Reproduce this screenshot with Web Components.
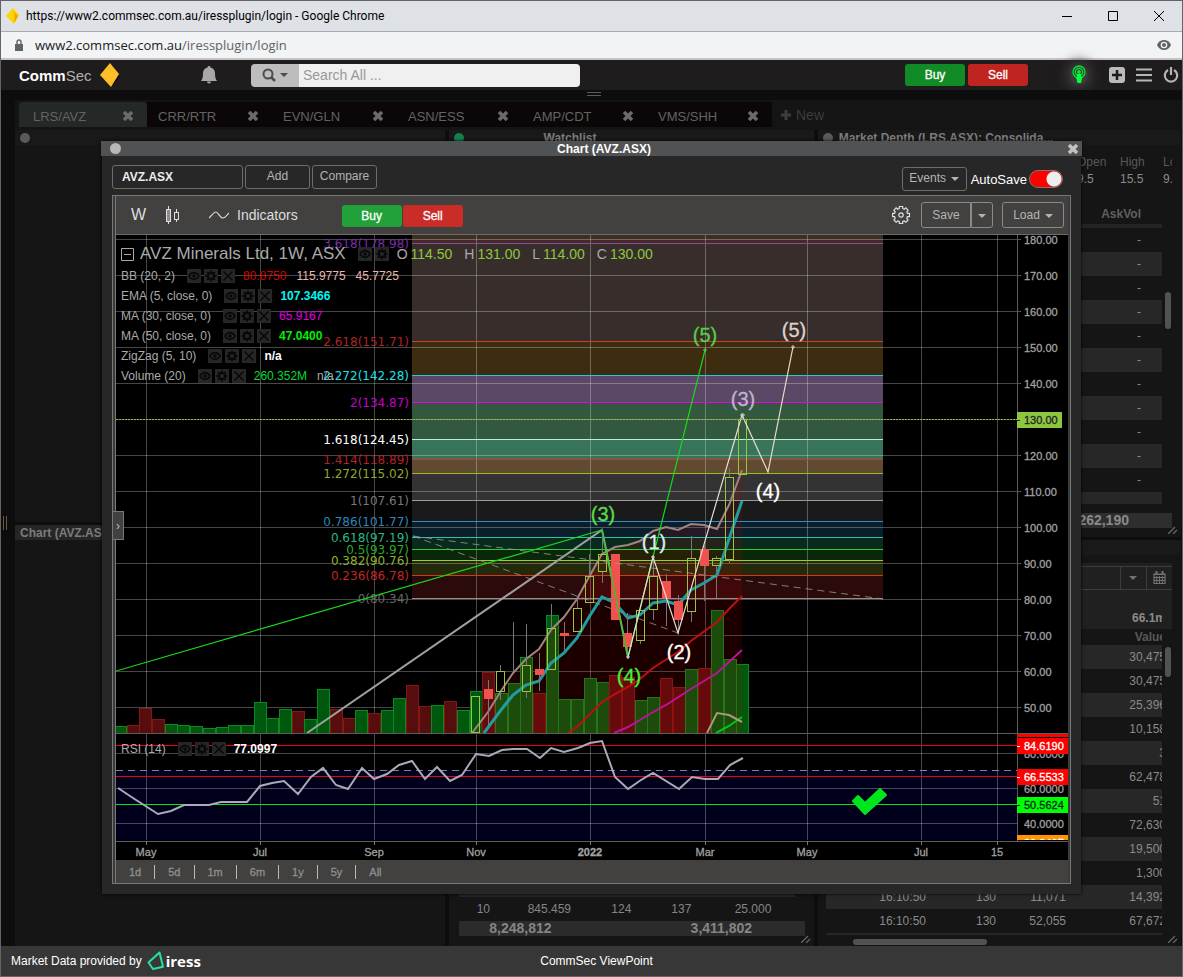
<!DOCTYPE html>
<html lang="en">
<head>
<meta charset="utf-8">
<title>CommSec ViewPoint</title>
<style>
  html, body {
    margin: 0;
    min-height: 100%;
    background: #0d0d0d;
  }

  body {
    font-family: "Liberation Sans", Arial, sans-serif;
    font-size: 12px;
  }
</style>
</head>
<body>
<vp-app></vp-app>

<script>
const ICONS = {
  diamond: ["0 0 24 26", `<path d="M13 3l8 12-9 10z" fill="#000" opacity=".6"/><path d="M11 1l9 11-8 13L1 13z" fill="#fdbf27"/>`],
  favicon: ["0 0 14 16", `<path d="M7 0l6 7-5 9L0 8z" fill="#ffd400"/><path d="M7 3l5 5-4 7 1-8z" fill="#f4a000"/>`],
  lock: ["0 0 10 12", `<path d="M1 5h8v7H1z" fill="#5f6368"/><path d="M3 5V3a2 2 0 0 1 4 0v2" fill="none" stroke="#5f6368" stroke-width="1.4"/>`],
  bell: ["0 0 16 18", `<path d="M8 0c1 0 1.500.6 1.500 1.500C12.500 2.200 14 4.500 14 7c0 4 .5 6 2 8H0c1.500-2 2-4 2-8 0-2.500 1.500-4.800 4.500-5.500C6.500.6 7 0 8 0zM6 15.500h4a2 2 0 0 1-4 0z" fill="#a8a8a8"/>`],
  search: ["0 0 14 14", `<circle cx="6" cy="6" r="4.500" fill="none" stroke="#4c4c4c" stroke-width="2"/><path d="M9 9l4 4" stroke="#4c4c4c" stroke-width="2.500"/>`],
  caret: ["0 0 8 4", `<path d="M0 0h8L4 4z" fill="currentColor"/>`],
  bulb: ["0 0 14 20", `<g fill="none" stroke="#00e535" stroke-width="1.300"><circle cx="7" cy="7" r="6"/><circle cx="7" cy="7" r="3.700"/></g><circle cx="7" cy="7" r="2" fill="#00e535"/><path d="M5 9h4v3h1.500L9 18H5.500L4 12h1z" fill="#00ff3c"/>`],
  plus: ["0 0 16 16", `<rect width="16" height="16" rx="3" fill="#bbb"/><path d="M8 3v10M3 8h10" stroke="#1f1c1d" stroke-width="2.500"/>`],
  menu: ["0 0 16 14", `<path d="M0 1.500h16M0 7h16M0 12.500h16" stroke="#b5b5b5" stroke-width="2.200"/>`],
  power: ["0 0 16 16", `<path d="M5 3a6.200 6.200 0 1 0 6 0" fill="none" stroke="#b5b5b5" stroke-width="2.200"/><path d="M8 0v8" stroke="#b5b5b5" stroke-width="2.200"/>`],
  cross: ["0 0 12 12", `<path d="M2 2l8 8M10 2l-8 8" stroke="currentColor" stroke-width="3.600"/>`],
  add: ["0 0 12 12", `<path d="M6 1v10M1 6h10" stroke="currentColor" stroke-width="3"/>`],
  minimise: ["0 0 10 10", `<path d="M0 5.500h10" stroke="#000"/>`],
  maximise: ["0 0 10 10", `<path d="M.5.5h9v9h-9z" fill="none" stroke="#000"/>`],
  close: ["0 0 10 10", `<path d="M0 0l10 10M10 0L0 10" stroke="#000"/>`],
  view: ["0 0 14 10", `<path d="M0 5c1.500-3.200 4-5 7-5s5.500 1.800 7 5c-1.500 3.200-4 5-7 5S1.500 8.200 0 5z" fill="#5f6368"/><circle cx="7" cy="5" r="3.300" fill="#f1f3f4"/><circle cx="7" cy="5" r="2" fill="#5f6368"/>`],
  candles: ["0 0 16 20", `<path d="M4.500 1v18M12.500 4v3M12.500 14v3" stroke="#ddd"/><rect x="2.500" y="4.500" width="4" height="12" fill="#8c8c8c" stroke="#ddd"/><rect x="10.500" y="7.500" width="4" height="7" fill="none" stroke="#ddd"/>`],
  wave: ["0 0 20 8", `<path d="M0 7C3 4 5 1 7 1s4 6 7 6c2 0 4-3 6-5" fill="none" stroke="#ddd" stroke-width="1.200"/>`],
  cog: ["0 0 20 20", `<path d="M8.300 1.500h3.400v2l1.600.8 1.600-1.400 2.200 2.300-1.300 1.700.6 1.500h2.100v3.300h-2.100l-.6 1.600 1.300 1.600-2.200 2.300-1.700-1.300-1.500.6v2H8.300v-2l-1.500-.6-1.700 1.300-2.200-2.300 1.300-1.600-.6-1.600h-2V8.400h2l.6-1.500-1.300-1.700 2.200-2.300 1.600 1.400 1.600-.8z" fill="none" stroke="#e0e0e0" stroke-width="1.200"/><circle cx="10" cy="10" r="2.200" fill="none" stroke="#e0e0e0" stroke-width="1.200"/>`],
  eye: ["0 0 14 14", `<path d="M2 7c1.200-2.300 3-3.400 5-3.400S10.800 4.700 12 7c-1.200 2.300-3 3.400-5 3.400S3.200 9.300 2 7z" fill="none" stroke="#080808" stroke-width="1.600"/><circle cx="7" cy="7" r="1.800" fill="#080808"/>`],
  gear: ["0 0 14 14", `<circle cx="7" cy="7" r="3" fill="none" stroke="#080808" stroke-width="2"/><path d="M7 1.500v3M7 9.500v3M1.500 7h3M9.500 7h3M3.200 3.200L5 5M9 9l1.800 1.800M10.800 3.200L9 5M5 9l-1.800 1.800" stroke="#080808" stroke-width="1.800"/>`],
  remove: ["0 0 14 14", `<path d="M2.500 2.500l9 9M11.500 2.500l-9 9" stroke="#080808" stroke-width="1.500"/>`],
  collapse: ["0 0 13 13", `<path d="M.5.5h12v12H.5zM3 6.500h7" fill="none" stroke="#aaa"/>`],
  calendar: ["0 0 13 13", `<path d="M1 3h11v9.500H1z" fill="none" stroke="#737373" stroke-width="1.200"/><path d="M1 3.500h11M1 6.500h11M1 9.500h11M3.700 5v7M6.500 5v7M9.300 5v7" stroke="#737373"/><path d="M3.500 0v4M9.500 0v4" stroke="#737373" stroke-width="2"/>`],
  grip: ["0 0 10 8", `<path d="M0 8L7 1M5 8l4-4" stroke="#666" stroke-width="1.300"/>`],
  iress: ["0 0 18 20", `<path d="M12.500 1.500L1.500 11.500 6 18l10-2.200z" fill="none" stroke="#25e39a" stroke-width="2" stroke-linejoin="round"/>`],
}

function define(name, html) {
  /* Register a custom element that renders the given shadow markup.
     html is a string, or a function of the element.
   */
  customElements.define(name, class extends HTMLElement {
    connectedCallback() {
      if (this.shadowRoot) return
      const root = this.attachShadow({ mode: "open" })
      const template = document.createElement("template")
      template.innerHTML = typeof html === "function" ? html(this) : html
      root.appendChild(template.content.cloneNode(true))
    }
  })
}

define("vp-icon", el => {
  const [box, body] = ICONS[el.getAttribute("name")]
  const [, , w, h] = box.split(" ")
  return `
    <style>
      :host { display: inline-flex; flex: none; }
      svg { display: block; }
    </style>
    <svg viewBox="${box}" width="${w}" height="${h}" aria-hidden="true">${body}</svg>`
})

define("vp-browser-bar", `
  <style>
    :host { display: block; font-family: "Open Sans", "Noto Sans", sans-serif; }
    .title {
      display: flex; align-items: center; gap: 6px;
      height: 30px; padding: 0 18px 0 5px;
      background: #dee1e6; border-bottom: 1px solid #a9abae;
      color: #000; font-size: 12px;
    }
    .caption { flex: 1; font-family: Roboto, sans-serif; }
    .controls { display: flex; gap: 36px; }
    .address {
      display: flex; align-items: center; gap: 11px;
      height: 26px; padding: 0 11px 0 13px;
      background: #f1f3f4; border-bottom: 2px solid #c2c3c4;
      color: #5f6368; font-size: 13px;
    }
    .url { flex: 1; }
    b { color: #202124; font-weight: 400; }
    button { padding: 0; border: 0; background: none; display: flex; }
  </style>
  <div class="title">
    <vp-icon name="favicon"></vp-icon>
    <span class="caption">https://www2.commsec.com.au/iressplugin/login - Google Chrome</span>
    <div class="controls">
      <button aria-label="Minimise"><vp-icon name="minimise"></vp-icon></button>
      <button aria-label="Maximise"><vp-icon name="maximise"></vp-icon></button>
      <button aria-label="Close"><vp-icon name="close"></vp-icon></button>
    </div>
  </div>
  <div class="address">
    <vp-icon name="lock"></vp-icon>
    <span class="url"><b>www2.commsec.com.au</b>/iressplugin/login</span>
    <vp-icon name="view"></vp-icon>
  </div>
`)

define("vp-trade", `
  <style>
    :host { display: flex; gap: var(--trade-gap, 1px); }
    button {
      width: 60px; height: 22px; padding: 0; border: 0; border-radius: 3px;
      font: 12px "Liberation Sans", Arial, sans-serif; color: #fff;
      -webkit-text-stroke: .3px #fff;
    }
    .buy { background: var(--buy, #22a13a); }
    .sell { background: var(--sell, #ca2c28); }
  </style>
  <button class="buy">Buy</button><button class="sell">Sell</button>
`)

define("vp-header", `
  <style>
    :host {
      display: flex; align-items: center;
      height: 30px; padding: 0 3px 0 18px;
      background: #1f1c1d;
    }
    .logo { display: flex; align-items: center; gap: 7px; width: 182px; font-size: 15px; color: #b0b0b0; }
    .logo b { color: #fff; }
    .search { display: flex; width: 329px; height: 23px; margin-left: 34px; border-radius: 4px; overflow: hidden; }
    .search button {
      display: flex; align-items: center; justify-content: center; gap: 4px;
      width: 48px; padding: 0; border: 0; background: #bdbdbd; color: #4c4c4c;
    }
    input {
      flex: 1; min-width: 0; padding: 0 4px; border: 0; background: #f0f0f0;
      font: 14px "Liberation Sans", Arial, sans-serif;
    }
    input::placeholder { color: #999; opacity: 1; }
    vp-trade { margin-left: auto; --trade-gap: 3px; --buy: #118b26; --sell: #c02420; }
    .tools { display: flex; align-items: center; gap: 11px; }
    .icon { padding: 0; border: 0; background: none; display: flex; }
    .bulb {
      margin: 0 21px 0 42px; padding: 0 2px; border-radius: 50%;
      background: #3c3a3a; box-shadow: 0 0 12px 4px #3c3a3a;
    }
  </style>
  <div class="logo"><span><b>Comm</b>Sec</span><vp-icon name="diamond"></vp-icon></div>
  <button class="icon" aria-label="Alerts"><vp-icon name="bell"></vp-icon></button>
  <div class="search">
    <button aria-label="Search scope"><vp-icon name="search"></vp-icon><vp-icon name="caret"></vp-icon></button>
    <input type="search" placeholder="Search All ..." aria-label="Search All">
  </div>
  <vp-trade></vp-trade>
  <button class="icon bulb" aria-label="Tips"><vp-icon name="bulb"></vp-icon></button>
  <div class="tools">
    <button class="icon" aria-label="Add"><vp-icon name="plus"></vp-icon></button>
    <button class="icon" aria-label="Menu"><vp-icon name="menu"></vp-icon></button>
    <button class="icon" aria-label="Log out"><vp-icon name="power"></vp-icon></button>
  </div>
`)

define("vp-tabs", () => {
  const tabs = ["LRS/AVZ", "CRR/RTR", "EVN/GLN", "ASN/ESS", "AMP/CDT", "VMS/SHH"]
  return `
    <style>
      :host { display: flex; height: 25px; padding: 2px 0 3px 4px; background: #141414; }
      .tab {
        display: flex; align-items: center; justify-content: space-between;
        box-sizing: border-box; width: 125px; padding: 3px 13px 0 11px;
        background: #0b0708; color: #636363; font-size: 13px;
      }
      .tab:first-of-type { width: 128px; padding-left: 14px; background: #242827; border-radius: 4px 4px 0 0; }
      .tab a { color: inherit; text-decoration: none; }
      button { display: flex; align-items: center; gap: 4px; padding: 0; border: 0; background: none; color: #6b6b6b; }
      .new { margin-left: 8px; color: #3c3c3c; font: 14px "Liberation Sans", Arial, sans-serif; }
    </style>
    ${tabs.map(t => `
      <div class="tab"><a href="#${t}">${t}</a>
        <button aria-label="Close ${t}"><vp-icon name="cross"></vp-icon></button>
      </div>`).join("")}
    <button class="new"><vp-icon name="add"></vp-icon>New</button>`
})

define("vp-panel", el => `
  <style>
    :host { display: flex; flex-direction: column; position: relative; min-width: 0; background: #151515; overflow: hidden; }
    header {
      display: flex; align-items: center; flex: none; gap: 6px;
      height: 15px; padding: 0 5px; color: #7c7c7c; font-weight: 700;
      background: var(--title-bg, #191919);
    }
    i { width: 10px; height: 10px; border-radius: 50%; background: var(--dot, #5a5a5a); }
    h2 {
      flex: 1; margin: 0 var(--title-end, 0) 0 0; font-size: 12px;
      text-align: var(--title-align, left); white-space: nowrap;
    }
    vp-icon { position: absolute; right: 3px; bottom: 3px; }
  </style>
  <header>${el.hasAttribute("plain") ? "" : "<i></i>"}<h2>${el.getAttribute("heading") || ""}</h2></header>
  <slot></slot>
  ${el.hasAttribute("grip") ? `<vp-icon name="grip"></vp-icon>` : ""}
`)

define("vp-watchlist", `
  <style>
    :host { display: block; margin: auto 9px 10px 10px; color: #858585; }
    table { width: calc(100% - 10px); border-collapse: collapse; table-layout: fixed; border-top: 3px solid #262626; }
    td { height: 24px; padding: 0; text-align: center; font-size: 12px; }
    .total {
      display: grid; grid-template-columns: 122px 80px 120px; line-height: 15px;
      background: #2b2b2b; text-align: center; font-size: 14px; font-weight: 700;
    }
    .total span:last-child { grid-column: 3; }
  </style>
  <table>
    <colgroup><col width="48"><col width="84"><col width="60"><col width="60"><col></colgroup>
    <tr><td>10</td><td>845.459</td><td>124</td><td>137</td><td>25.000</td></tr>
  </table>
  <div class="total"><span>8,248,812</span><span>3,411,802</span></div>
`)

define("vp-depth", `
  <style>
    :host { display: block; margin: 9px 9px 10px 8px; color: #8a8a8a; }
    .stats {
      display: grid; grid-template-columns: 43px 43px 9px; justify-content: end;
      line-height: 17px; overflow: hidden; font-size: 12px;
    }
    .stats span { overflow: hidden; white-space: nowrap; }
    .stats .name { color: #585858; }
    .body { display: flex; margin-top: 16px; height: 300px; overflow: hidden; }
    .rows { flex: 1; overflow: hidden; }
    table { width: 100%; border-collapse: collapse; }
    th, td { padding: 0 21px 0 0; text-align: right; font-size: 12px; }
    th { height: 20px; color: #606060; border-bottom: 4px solid #242424; }
    td { height: 24px; }
    tbody tr:nth-child(even) { background: #272727; }
    .thumb { width: 6px; height: 37px; margin: 88px 1px 0 3px; border-radius: 3px; background: #515254; }
    .total {
      margin-top: 9px; padding-right: 43px; line-height: 15px;
      background: #2e2e2e; text-align: right; font-size: 14px; font-weight: 700;
    }
  </style>
  <div class="stats">
    <span class="name">Open</span><span class="name">High</span><span class="name">Low</span>
    <span>9.5</span><span>15.5</span><span>9.5</span>
  </div>
  <div class="body">
    <div class="rows">
      <table>
        <thead><tr><th>AskVol</th></tr></thead>
        <tbody>${"<tr><td>-</td></tr>".repeat(12)}</tbody>
      </table>
    </div>
    <div class="thumb"></div>
  </div>
  <div class="total">262,190</div>
`)

define("vp-sales", () => {
  const values = ["30,475", "30,475", "25,396", "10,158", "3", "62,478", "51", "72,630", "19,500", "1,300"]
  const rows = values.map(v => ["", "", "", v])
  rows.push(["16:10:50", "130", "11,071", "14,392"], ["16:10:50", "130", "52,055", "67,672"])
  return `
    <style>
      :host { display: block; margin: 8px 9px 0 8px; color: #8a8a8a; }
      .filter { padding: 3px 0 0; background: #202020; }
      .controls { display: flex; justify-content: flex-end; height: 24px; box-sizing: border-box; border: 1px solid #3d3d3d; border-right: 0; }
      .controls button {
        display: flex; align-items: center; justify-content: center; width: 26px;
        padding: 0; border: 0; border-left: 1px solid #3d3d3d; background: none; color: #707070;
      }
      .sum { margin-right: 10px; overflow: hidden; padding-top: 17px; line-height: 22px; }
      .sum b { display: block; width: calc(100% + 4px); text-align: right; }
      .body { display: flex; }
      .rows { flex: 1; overflow: hidden; border-bottom: 2px solid #262626; }
      table { width: calc(100% + 4px); border-collapse: collapse; table-layout: fixed; }
      th, td { padding: 0; text-align: right; font-size: 12px; }
      th { height: 16px; color: #585858; }
      td { height: 24px; }
      tbody tr:nth-child(odd) { background: #272727; }
      .thumb { width: 6px; height: 30px; margin: 18px 1px 0 3px; border-radius: 3px; background: #515254; }
      .bar { width: 134px; height: 6px; margin: 4px 0 0 27px; border-radius: 3px; background: #515254; }
    </style>
    <div class="filter">
      <div class="controls">
        <button aria-label="Options"><vp-icon name="caret"></vp-icon></button>
        <button aria-label="Date"><vp-icon name="calendar"></vp-icon></button>
      </div>
      <div class="sum"><b>66.1m</b></div>
    </div>
    <div class="body">
      <div class="rows">
        <table>
          <colgroup><col><col width="70"><col width="70"><col width="100"></colgroup>
          <thead><tr><th></th><th></th><th></th><th>Value</th></tr></thead>
          <tbody>${rows.map(r => `<tr>${r.map(c => `<td>${c}</td>`).join("")}</tr>`).join("")}</tbody>
        </table>
      </div>
      <div class="thumb"></div>
    </div>
    <div class="bar"></div>`
})

define("vp-study", el => {
  const icons = (el.getAttribute("icons") || "eye gear remove").split(" ")
  return `
    <style>
      :host { display: flex; align-items: center; height: 20px; color: #aaa; white-space: nowrap; }
      .icons { display: flex; gap: 3px; margin: 0 8px 0 12px; }
      button { display: flex; padding: 0; border: 0; background: #262626; }
      .values { display: flex; gap: 10px; }
    </style>
    <slot name="name"></slot>
    <span class="icons">${icons.map(i => `<button aria-label="${i}"><vp-icon name="${i}"></vp-icon></button>`).join("")}</span>
    <span class="values"><slot></slot></span>`
})

// Canvas geometry of the chart, in drawing units.
const LEFT = 116
const RIGHT = 1068
const AXIS = 1017
const FLOOR = 733
const FIRST = 475.5
const STEP = 12.7

const MONTHS = [[146, "May"], [260, "Jul"], [374, "Sep"], [476, "Nov"], [590, "2022"], [705, "Mar"], [807, "May"], [921, "Jul"], [997, "15"]]

// ratio, price, label colour, line colour, fill of the zone below
const FIB = [
  ["3.618", 178.98, "#7a2fa6", "#9c3fae", "#372e2b"],
  ["2.618", 151.71, "#ad2424", "#c8412f", "#3e2c10"],
  ["2.272", 142.28, "#1ee0ea", "#22c8e0", "#5b4866"],
  ["2", 134.87, "#c400c8", "#f000f0", "#32593f"],
  ["1.618", 124.45, "#ffffff", "#b8f0cc", "#37745a"],
  ["1.414", 118.89, "#ad2424", "#c83a38", "#614a2f"],
  ["1.272", 115.02, "#8fa82a", "#9ab82c", "#333333"],
  ["1", 107.61, "#787878", "#9a9a9a", "#1a1a1a"],
  ["0.786", 101.77, "#2a86bd", "#2f8fc8", "#0a1e2b"],
  ["0.618", 97.19, "#27b88c", "#2fc2a0", "#0a291f"],
  ["0.5", 93.97, "#25ad2a", "#2fc83a", "#0a2709"],
  ["0.382", 90.76, "#8fb02a", "#9ad02c", "#23290b"],
  ["0.236", 86.78, "#c22626", "#d83422", "#2a0a0a"],
  ["0", 80.34, "#666666", "#9a8a8a", null],
]

// Weekly volume heights, negative for a falling week. The last one is the current week.
const VOLUME = [
  7, -8, -25, -14, 9, 8, 7, 5, 6, 8, 8, 31, 15, 24, -22, 14, 44, -24, -15, 23, -20, 23, 35, -48, -27, 28, -32, 23,
  42, -61, 40, 50, 76, -40, 118, 34, 34, 55, 51, -58, -56, 33, 36, -55, -46, 64, -65, 123, 74, 69,
]

// body top, body bottom, high, low, rising
const CANDLES = [
  [696, 733, 696, 733, 1], [689, 699, 680, 725, 0], [671, 692, 665, 700, 1], [665, 665, 622, 671, 1],
  [665, 692, 624, 698, 1], [669, 675, 653, 691, 0], [628, 670, 604, 670, 1], [633, 636, 622, 651, 0],
  [608, 632, 599, 632, 1], [576, 603, 554, 603, 1], [554, 572, 529, 583, 1], [554, 620, 554, 620, 0],
  [633, 647, 613, 659, 0], [610, 641, 610, 644, 1], [576, 610, 556, 620, 1], [581, 598, 574, 626, 0],
  [601, 620, 595, 634, 0], [558, 612, 536, 622, 1], [549, 566, 545, 601, 0], [558, 566, 556, 598, 1],
  [477, 560, 468, 563, 1], [419, 475, 414, 475, 1],
]

const BAND = "472,733 488,712 501,691 513,673 526,659 539,649 551,630 564,617 577,599 589,577 602,554 615,547 628,545 640,541 653,531 666,527 678,530 691,524 704,525 717,529 729,505 742,470"
const EMA = "484,733 501,710 513,695 526,685 539,681 551,663 564,653 577,638 589,617 602,597 615,603 628,618 640,615 653,603 666,601 678,605 691,590 704,583 717,575 729,539 742,501"
const MA30 = "568,733 577,727 602,702 615,694 628,687 640,679 653,668 678,652 691,641 717,622 729,609 742,596"
const MA50 = "614,733 628,727 640,720 653,712 666,705 691,689 717,673 742,650"
const RSI = "118,788 133,798 158,814 171,811 184,805 209,805 221,802 247,802 260,786 272,783 284,781 298,794 311,777 323,768 336,785 348,789 362,768 374,779 387,774 399,765 412,761 425,779 437,767 450,781 462,775 476,754 489,756 502,750 513,749 527,749 540,758 551,748 564,752 578,748 590,743 602,741 615,777 628,789 641,780 653,773 679,789 692,777 705,779 718,779 730,765 743,758"

const WAVES = [
  [705, 335, "5", "#55cf45"], [603, 514, "3", "#55df45"], [629, 676, "4", "#45f035"],
  [794, 330, "5", "#ddd3cc"], [743, 399, "3", "#bfb3d0"], [768, 491, "4", "#fff"],
  [654, 542, "1", "#d8eef0"], [679, 652, "2", "#fff"],
]

const priceY = price => 239.5 + (180 - price) * 3.6

function rect(x, y, w, h, attrs) {
  return `<rect x="${x}" y="${y}" width="${w}" height="${h}" ${attrs}/>`
}

function line(x1, y1, x2, y2, attrs) {
  return `<path d="M${x1} ${y1}L${x2} ${y2}" ${attrs}/>`
}

function drawGrid() {
  const out = []
  for (let price = 180; price >= 50; price -= 10) {
    out.push(line(LEFT, priceY(price), AXIS, priceY(price), ""))
  }
  for (const y of [753.5, 788.5, 823.5]) out.push(line(LEFT, y, AXIS, y, ""))
  for (const [x] of MONTHS) out.push(line(x + .5, 235, x + .5, 840, ""))
  return `<g stroke="#fff" stroke-opacity=".28">${out.join("")}</g>`
}

function drawZones() {
  const zones = FIB.slice(0, -1).map(([, price, , , fill], i) => {
    const top = priceY(price)
    return rect(412, top, 471, priceY(FIB[i + 1][1]) - top, `fill="${fill}"`)
  })
  return rect(412, 235, 471, 9, `fill="#3f2e23"`) + zones.join("")
}

function drawFibLines() {
  return FIB.map(([ratio, price, color, stroke]) => {
    const y = Math.floor(priceY(price) + .2) + .5
    return line(412, y, 883, y, `stroke="${stroke}" stroke-width="1.2"`) +
      `<text x="409" y="${y + 4}" text-anchor="end" fill="${color}">${ratio}(${price.toFixed(2)})</text>`
  }).join("")
}

function drawVolume() {
  return VOLUME.map((v, i) => {
    const x = Math.round(FIRST + (i - 28) * STEP - 6)
    const h = Math.abs(v)
    return rect(x + .5, FLOOR - h + .5, 12, h, v > 0 ? `fill="#00580f" stroke="#0a8a1f"` : `fill="#560d0d" stroke="#861515"`)
  }).join("")
}

function drawCandles() {
  return CANDLES.map(([top, bottom, high, low, up], i) => {
    const x = Math.round(FIRST + i * STEP - .5)
    const color = up ? "#9bc53d" : "#f0524f"
    return line(x + .5, high, x + .5, top, `stroke="#777"`) + line(x + .5, bottom, x + .5, low, `stroke="#777"`) +
      rect(x - 3.5, top + .5, 8, Math.max(bottom - top - 1, 0), `fill="${up ? "none" : color}" stroke="${color}"`)
  }).join("")
}

function drawAxis() {
  const out = []
  for (let price = 180; price >= 50; price -= 10) {
    if (price === 130) continue
    out.push(line(AXIS, priceY(price), AXIS + 4, priceY(price), `stroke="#555"`))
    out.push(`<text x="1024" y="${priceY(price) + 4}">${price.toFixed(2)}</text>`)
  }
  for (const [y, label] of [[754, "80.0000"], [789, "60.0000"], [824, "40.0000"]]) {
    out.push(`<text x="1024" y="${y + 4}">${label}</text>`)
  }
  for (const [x, label] of MONTHS) {
    out.push(line(x + .5, 841, x + .5, 845, `stroke="#777"`))
    out.push(`<text x="${x}" y="856" text-anchor="middle" ${label === "2022" ? `font-weight="700"` : ""}>${label}</text>`)
  }
  return out.join("")
}

function drawTag(y, label, fill, color, width = 51) {
  return rect(AXIS, y, width, 16, `fill="${fill}" stroke="none"`) +
    line(AXIS, y + 8.5, AXIS + 3, y + 8.5, `stroke="${color}"`) +
    `<text x="1024" y="${y + 12}" fill="${color}" stroke="${color}">${label}</text>`
}

define("vp-chart", () => `
  <style>
    :host { display: block; position: relative; background: #000; }
    svg { display: block; width: 100%; height: auto; }
    polyline, .open { fill: none; }
    .fib { font: 12px "DejaVu Sans", Verdana, sans-serif; }
    .axis { font: 11px "Liberation Sans", Arial, sans-serif; fill: #a2a2a2; stroke: #a2a2a2; }
    .axis text { stroke-width: .3px; }
    .waves { font: 20px "Liberation Sans", Arial, sans-serif; }
    .legend { position: absolute; left: 5px; top: 7px; }
    .symbol { display: flex; align-items: center; height: 24px; color: #aaa; white-space: nowrap; }
    .symbol button { display: flex; padding: 0; border: 0; background: #262626; }
    .symbol .toggle { background: none; }
    h1 { margin: 0 12px 0 6px; font-size: 17px; font-weight: 400; }
    .icons { display: flex; gap: 3px; margin-right: 8px; }
    .ohlc { display: flex; gap: 12px; font-size: 14px; }
    .ohlc span { color: #8dc63f; margin-left: 3px; }
    .rsi { position: absolute; left: 5px; top: 504px; }
  </style>
  <svg viewBox="${LEFT} 235 ${RIGHT - LEFT} 625" role="img" aria-label="Weekly price chart">
    <defs>
      <clipPath id="price"><rect x="116" y="235" width="901" height="498"/></clipPath>
      <clipPath id="foot"><rect x="1017" y="835" width="51" height="5"/></clipPath>
    </defs>
    ${drawZones()}
    ${rect(LEFT, 770, AXIS - LEFT, 70, `fill="#00001c"`)}
    ${drawGrid()}
    <g clip-path="url(#price)">
      ${drawVolume()}
      <polygon points="${BAND} 742,733" fill="#c80000" fill-opacity=".14"/>
    </g>
    <g class="fib">${drawFibLines()}</g>
    <g clip-path="url(#price)">
      <polyline points="${BAND}" stroke="#a08480" stroke-width="2"/>
      <polyline points="${EMA}" stroke="#219ca0" stroke-width="3"/>
      <polyline points="${MA30}" stroke="#bd1010" stroke-width="2"/>
      <polyline points="${MA50}" stroke="#b8149a" stroke-width="2"/>
      <polyline points="716,733 729,726 742,717" stroke="#00c814" stroke-width="2"/>
      <polyline points="707,733 717,713 729,715 742,722" stroke="#a8987c" stroke-width="2"/>
      <polyline points="307,733 602,530 628,657" stroke="#a0a0a0" stroke-width="2"/>
      ${drawCandles()}
      <g class="open" stroke="#9a9a90" stroke-dasharray="7 5" stroke-opacity=".8">
        <path d="M413 536L883 599M413 536L678 633"/>
      </g>
      <polyline points="116,671 602,530 628,657 653,557 705,350" stroke="#19d819" stroke-width="1.2"/>
      <polyline points="628,657 653,557 678,633 742,415 768,472 793,347" stroke="#e4ddd2" stroke-width="1.2"/>
      <g class="open" stroke="#cfcfcf">
        <path d="M627 656h2v2h-2zM652 556h2v2h-2zM741 414h3v2h-3zM792 346h2v2h-2z"/>
        <path d="M704 349h2v2h-2z" stroke="#55cf45"/>
      </g>
      <path d="M116 419.500H1017" stroke="#9ab83c" stroke-dasharray="2 1"/>
    </g>
    <g class="waves" text-anchor="middle">
      ${WAVES.map(([x, y, n, fill]) => `<text x="${x}" y="${y + 7}" fill="${fill}" stroke="${fill}" stroke-width=".3">(${n})</text>`).join("")}
    </g>
    <path d="M116 733.500H1068M116 841.500H1068M1017.500 235V841" stroke="#5c5c5c"/>
    <path d="M116 745.500H1017M116 776.500H1017" stroke="#f00014"/>
    <path d="M116 804.500H1017" stroke="#00e614"/>
    <path d="M116 770.500H1017" stroke="#85858f" stroke-dasharray="7 5"/>
    <polyline points="${RSI}" stroke="#aaaab8" stroke-width="2"/>
    <path d="M853 801l5-5 7 7 15-14 6 6-21 19z" fill="#00e61e" stroke="#00e61e" stroke-width="2" stroke-linejoin="round"/>
    <g class="axis">
      ${drawAxis()}
      ${drawTag(412, "130.00", "#8dc63f", "#222", 45)}
      <rect x="1017" y="734" width="51" height="3" fill="#f00" stroke="none"/>
      ${drawTag(738, "84.6190", "#f00", "#fff")}
      ${drawTag(769, "66.5533", "#f00", "#fff")}
      ${drawTag(797, "50.5624", "#0f0", "#123")}
      <g clip-path="url(#foot)">${drawTag(835, "30.8407", "#ff9500", "#fff")}</g>
    </g>
  </svg>
  <div class="legend">
    <div class="symbol">
      <button class="toggle" aria-label="Collapse"><vp-icon name="collapse"></vp-icon></button>
      <h1>AVZ Minerals Ltd, 1W, ASX</h1>
      <span class="icons">
        <button aria-label="Show"><vp-icon name="eye"></vp-icon></button>
        <button aria-label="Settings"><vp-icon name="gear"></vp-icon></button>
      </span>
      <div class="ohlc">
        <div>O<span>114.50</span></div><div>H<span>131.00</span></div>
        <div>L<span>114.00</span></div><div>C<span>130.00</span></div>
      </div>
    </div>
    <vp-study><span slot="name">BB (20, 2)</span>
      <span style="color: #d80000">80.8750</span><span style="color: #e8b8b0">115.9775</span><span style="color: #e8b8b0">45.7725</span>
    </vp-study>
    <vp-study><span slot="name">EMA (5, close, 0)</span><b style="color: #00f5f5">107.3466</b></vp-study>
    <vp-study><span slot="name">MA (30, close, 0)</span><span style="color: #e000e0">65.9167</span></vp-study>
    <vp-study><span slot="name">MA (50, close, 0)</span><b style="color: #00f000">47.0400</b></vp-study>
    <vp-study><span slot="name">ZigZag (5, 10)</span><b style="color: #fff">n/a</b></vp-study>
    <vp-study><span slot="name">Volume (20)</span><span style="color: #00dc32">260.352M</span><span>n/a</span></vp-study>
  </div>
  <vp-study class="rsi"><span slot="name">RSI (14)</span><b style="color: #fff">77.0997</b></vp-study>
`)

define("vp-ranges", `
  <style>
    :host { display: flex; align-items: center; height: 23px; padding-left: 13px; background: #424140; }
    button {
      padding: 0; margin-right: 13px; border: 0; background: none; color: #8f8f8f;
      font: 11px/14px "Liberation Sans", Arial, sans-serif; -webkit-text-stroke: .3px #8f8f8f;
    }
    button + button { padding-left: 13px; border-left: 1px solid #bbb; }
  </style>
  <button>1d</button><button>5d</button><button>1m</button><button>6m</button><button>1y</button><button>5y</button><button>All</button>
`)

define("vp-chart-window", `
  <style>
    :host { display: block; background: #272727; box-shadow: 0 0 3px #000; }
    button, input { font: 12px "Liberation Sans", Arial, sans-serif; }
    .title {
      display: flex; align-items: center; height: 15px; margin: 0 -1px; padding: 0 3px 0 9px;
      background: #515254; color: #fff; font-weight: 700; text-align: center;
    }
    .title i { width: 11px; height: 11px; border-radius: 50%; background: #b8b8b8; }
    .title h2 { flex: 1; margin: 0 0 0 20px; font-size: 12px; }
    .title button { display: flex; padding: 0; border: 0; background: none; color: #c2c2c2; }
    .body { padding: 9px 10px 10px; }
    .top { display: flex; align-items: flex-start; gap: 2px; height: 30px; }
    .top input[type=text], .btn {
      box-sizing: border-box; height: 24px; border: 1px solid #6c6c6c; border-radius: 3px;
      background: none; color: #b4b4b4;
    }
    .top input[type=text] { width: 131px; padding: 0 9px; color: #eee; font-weight: 700; }
    .top .btn { width: 65px; padding: 0 0 2px; }
    .end { display: flex; align-items: center; gap: 4px; margin: 2px 8px 0 auto; color: #fff; font-size: 13px; }
    .end label { display: flex; align-items: center; gap: 2px; }
    .switch {
      appearance: none; width: 34px; height: 18px; margin: 0; border: 1px solid #777; border-radius: 9px;
      background: radial-gradient(circle at calc(100% - 8px) 50%, #eee 7px, red 8px);
    }
    .frame {
      position: relative; padding: 0 2px; border: 1px solid #777; background: #3a3a3a;
    }
    .inner { border-left: 1px solid #777; }
    .tools {
      display: flex; align-items: center; height: 38px; padding: 0 4px 0 15px;
      background: #424140; border-bottom: 1px solid #6c6c6c; color: #ddd;
    }
    .tools .flat { display: flex; align-items: center; gap: 8px; padding: 0; border: 0; background: none; color: #ddd; font-size: 14px; }
    .tools .week { font-size: 16px; width: 16px; margin-right: 17px; }
    .tools .kind { margin-right: 29px; }
    .tools vp-trade { margin: 2px auto 0 44px; }
    .tools .btn { height: 26px; border-color: #8a8a8a; padding: 0; }
    .save { width: 50px; margin-left: 10px; border-radius: 3px 0 0 3px; }
    .more { width: 22px; margin: 0 9px 0 0; border-radius: 0 3px 3px 0; }
    .load { width: 62px; }
    .btn vp-icon { margin-left: 5px; vertical-align: middle; }
    .more vp-icon { margin: 0; }
    .drawer {
      position: absolute; left: 0; top: 315px; width: 11px; height: 29px; padding: 0;
      border: 1px solid #777; border-left: 0; background: #424140; color: #bbb;
    }
  </style>
  <div class="title">
    <i></i><h2>Chart (AVZ.ASX)</h2>
    <button aria-label="Close chart"><vp-icon name="cross"></vp-icon></button>
  </div>
  <div class="body">
    <div class="top">
      <input type="text" value="AVZ.ASX" aria-label="Security code">
      <button class="btn">Add</button>
      <button class="btn">Compare</button>
      <div class="end">
        <button class="btn">Events<vp-icon name="caret"></vp-icon></button>
        <label>AutoSave <input class="switch" type="checkbox" role="switch" checked></label>
      </div>
    </div>
    <div class="frame">
      <div class="inner">
        <div class="tools">
          <button class="flat week">W</button>
          <button class="flat kind" aria-label="Chart type"><vp-icon name="candles"></vp-icon></button>
          <button class="flat"><vp-icon name="wave"></vp-icon>Indicators</button>
          <vp-trade></vp-trade>
          <button class="flat" aria-label="Settings"><vp-icon name="cog"></vp-icon></button>
          <button class="btn save">Save</button><button class="btn more" aria-label="Save options"><vp-icon name="caret"></vp-icon></button>
          <button class="btn load">Load<vp-icon name="caret"></vp-icon></button>
        </div>
        <vp-chart></vp-chart>
        <vp-ranges></vp-ranges>
      </div>
      <button class="drawer" aria-label="Drawing tools">›</button>
    </div>
  </div>
`)

define("vp-footer", `
  <style>
    :host {
      display: grid; grid-template-columns: 1fr auto 1fr; align-items: center;
      height: 30px; padding: 0 0 0 10px; background: #373737; color: #fff;
    }
    .data { display: flex; align-items: center; gap: 5px; }
    .brand { display: flex; align-items: center; gap: 1px; font: 700 15px "Open Sans", sans-serif; }
  </style>
  <div class="data">Market Data provided by
    <span class="brand"><vp-icon name="iress"></vp-icon>iress</span>
  </div>
  <div>CommSec ViewPoint</div>
`)

define("vp-app", `
  <style>
    :host {
      display: flex; flex-direction: column; box-sizing: border-box; min-height: 100vh;
      border: 1px solid #646464;
    }
    .split { display: flex; flex-direction: column; align-items: center; gap: 2px; height: 8px; padding: 2px 0 0 4px; background: #0d0d0d; }
    .split i { width: 14px; height: 1px; background: #5c5c5c; }
    .main { display: flex; flex: 1; background: #0d0d0d; }
    .rail { display: flex; align-items: center; gap: 1px; width: 12px; padding-left: 2px; }
    .rail i { width: 1px; height: 14px; background: #6b5638; }
    .rail i + i { margin-left: 1px; }
    .desk { flex: 1; display: flex; flex-direction: column; min-width: 0; }
    .panels {
      flex: 1; position: relative; display: grid; gap: 4px; padding-right: 1px;
      grid-template-columns: 430fr 364fr 363fr;
    }
    .column { display: flex; flex-direction: column; gap: 3px; min-width: 0; }
    .column vp-panel { flex: 1; }
    .column .wide { flex: 392 1 0; }
    .watch { --dot: #17804a; --title-align: center; --title-end: 139px; }
    .column .parked { flex: 421 1 0; --title-bg: #262626; }
    /* floating window on the desk */
    vp-chart-window { position: absolute; left: 87px; right: 101px; top: 11px; }
  </style>
  <vp-browser-bar></vp-browser-bar>
  <vp-header></vp-header>
  <div class="split"><i></i><i></i></div>
  <div class="main">
    <div class="rail"><i></i><i></i></div>
    <div class="desk">
      <vp-tabs></vp-tabs>
      <div class="panels">
        <div class="column">
          <vp-panel class="wide"></vp-panel>
          <vp-panel class="parked" heading="Chart (AVZ.ASX)" plain></vp-panel>
        </div>
        <vp-panel class="watch" heading="Watchlist" grip><vp-watchlist></vp-watchlist></vp-panel>
        <div class="column">
          <vp-panel heading="Market Depth (LRS.ASX): Consolida..." grip><vp-depth></vp-depth></vp-panel>
          <vp-panel grip><vp-sales></vp-sales></vp-panel>
        </div>
        <vp-chart-window></vp-chart-window>
      </div>
    </div>
  </div>
  <vp-footer></vp-footer>
`)
</script>
</body>
</html>
